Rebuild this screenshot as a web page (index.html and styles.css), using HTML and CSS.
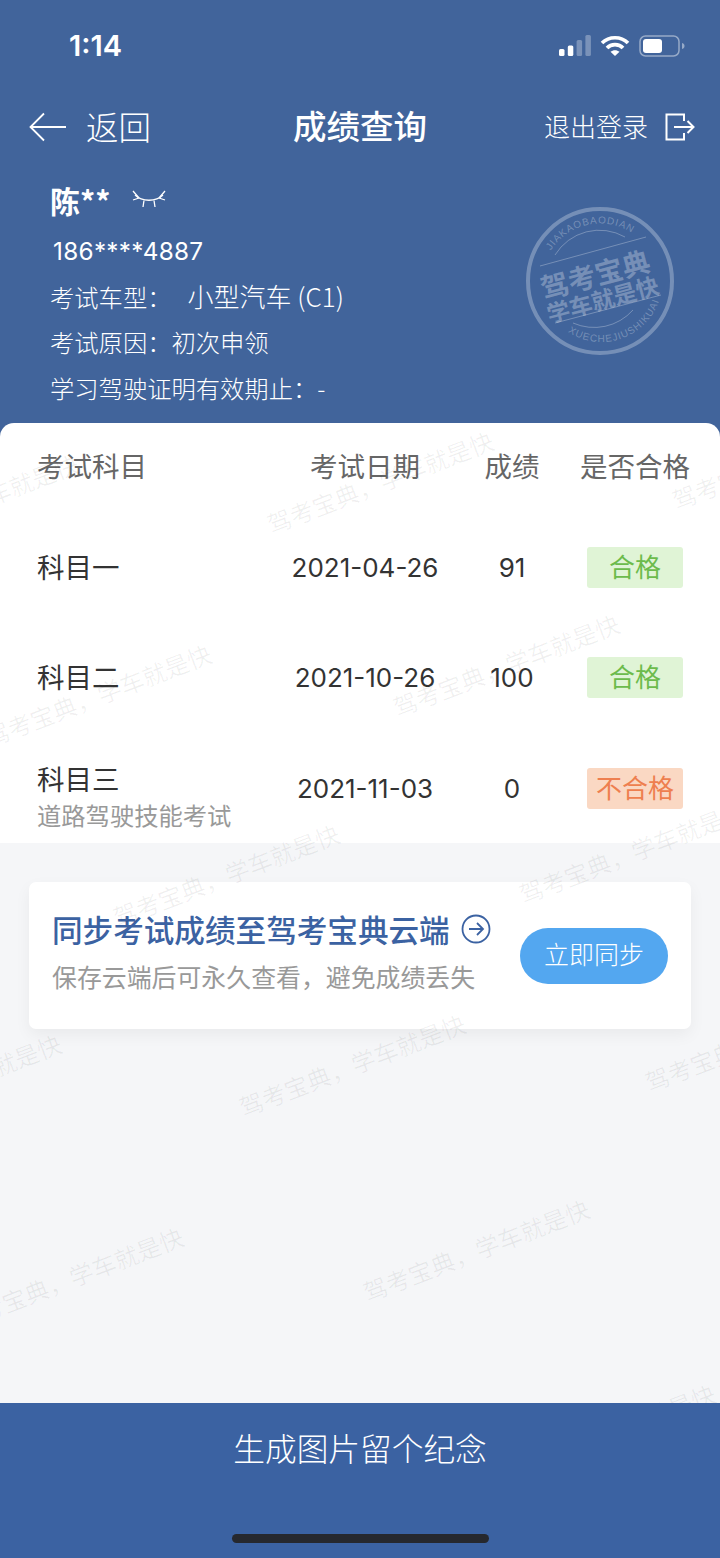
FILE: index.html
```html
<!DOCTYPE html>
<html lang="zh-CN">
<head>
  <meta charset="utf-8">
  <meta name="viewport" content="width=device-width, initial-scale=1.0">
  <link rel="stylesheet" href="styles.css">
  <title>成绩查询</title>
</head>
<body>
  <div class="page">
    <header class="top">
      <div class="status-bar">
        <span class="clock">1:14</span>
        <div class="status-icons">
          <svg width="32" height="21" viewBox="0 0 32 21">
            <rect x="0" y="14" width="5.500" height="7" rx="1.500" fill="#fff"/>
            <rect x="8.800" y="10.500" width="5.500" height="10.500" rx="1.500" fill="#fff"/>
            <rect x="17.600" y="5" width="5.500" height="16" rx="1.500" fill="#fff" fill-opacity=".3"/>
            <rect x="26.400" y="0" width="5.500" height="21" rx="1.500" fill="#fff" fill-opacity=".3"/>
          </svg>
          <svg width="30" height="22" viewBox="0 0 30 22" fill="none" stroke="#fff" stroke-width="3.600">
            <path d="M2 8 C9 1 21 1 28 8"/>
            <path d="M7 13 C11 8.500 19 8.500 23 13"/>
            <path d="M15 21 L10.500 16.800 C13 14.600 17 14.600 19.500 16.800 Z" fill="#fff" stroke="none"/>
          </svg>
          <svg width="46" height="22" viewBox="0 0 46 22">
            <rect x="1" y="1" width="39" height="20" rx="5.500" fill="none" stroke="#fff" stroke-opacity=".45" stroke-width="1.500"/>
            <rect x="4" y="4" width="19" height="14" rx="3" fill="#fff"/>
            <path d="M43 8 C45 8.500 45.500 9.800 45.500 11 C45.500 12.200 45 13.500 43 14 Z" fill="#fff" fill-opacity=".45"/>
          </svg>
        </div>
      </div>
      <nav class="nav">
        <div class="nav-back">
          <svg width="38" height="30" viewBox="0 0 38 30" fill="none" stroke="#fff" stroke-width="1.800">
            <path d="M15 1.500 L1.500 15 L15 28.500"/>
            <path d="M1.500 15 H37"/>
          </svg>
          <span>返回</span>
        </div>
        <h1 class="nav-title">成绩查询</h1>
        <div class="nav-logout">
          <span>退出登录</span>
          <svg width="30" height="28" viewBox="0 0 30 28" fill="none" stroke="#fff" stroke-width="2">
            <path d="M19 8 V1.500 H1.500 V26.500 H19 V20"/>
            <path d="M9 14 H28.500"/>
            <path d="M22.500 8 L28.500 14 L22.500 20"/>
          </svg>
        </div>
      </nav>
      <section class="profile">
        <div class="profile-name">
          <strong>陈**</strong>
          <svg width="34" height="20" viewBox="0 0 34 20" fill="none" stroke="#fff" stroke-width="1.300">
            <path d="M3 5 C10 12 24 12 31 5"/>
            <path d="M1 1 L7 8 M33 1 L27 8 M1 10 L7 8 M33 10 L27 8"/>
            <path d="M12 10.500 L11 17 M22 10.500 L23 17"/>
          </svg>
        </div>
        <p class="profile-phone">186****4887</p>
        <p>考试车型：<span class="profile-car">小型汽车 (C1)</span></p>
        <p>考试原因：初次申领</p>
        <p>学习驾驶证明有效期止：-</p>
        <svg class="stamp" width="150" height="150" viewBox="0 0 150 150" fill="none" stroke="#fff" stroke-opacity=".28">
          <defs>
            <path id="arc-top" d="M26 44.500 A58 58 0 0 1 125 46"/>
            <path id="arc-bottom" d="M43 126 A61 61 0 0 0 136 88"/>
          </defs>
          <circle cx="75" cy="75" r="72" stroke-width="4"/>
          <path d="M30 49 A52 52 0 0 1 100 31" stroke-width="1"/>
          <path d="M15 60 L121 31 M30 117 L136 89" stroke-width="1"/>
          <path d="M48 117 A52 52 0 0 0 108 104" stroke-width="1"/>
          <text class="stamp-small" stroke="none"><textPath href="#arc-top">JIAKAOBAODIAN</textPath></text>
          <text class="stamp-small" stroke="none"><textPath href="#arc-bottom">XUECHEJIUSHIKUAI</textPath></text>
          <text class="stamp-big" x="73" y="79" text-anchor="middle" stroke="none" transform="rotate(-15 73 79)">驾考宝典</text>
          <text class="stamp-mid" x="80" y="102" text-anchor="middle" stroke="none" transform="rotate(-15 80 102)">学车就是快</text>
        </svg>
      </section>
    </header>

    <main class="content">
      <section class="scores">
        <div class="row row-head">
          <span>考试科目</span>
          <span class="cell">考试日期</span>
          <span class="cell">成绩</span>
          <span class="cell">是否合格</span>
        </div>
        <div class="row">
          <span class="subject-name">科目一</span>
          <span class="cell num">2021-04-26</span>
          <span class="cell num">91</span>
          <span class="cell"><b class="tag tag-pass">合格</b></span>
        </div>
        <div class="row">
          <span class="subject-name">科目二</span>
          <span class="cell num">2021-10-26</span>
          <span class="cell num">100</span>
          <span class="cell"><b class="tag tag-pass">合格</b></span>
        </div>
        <div class="row">
          <div class="subject">
            <span>科目三</span>
            <small>道路驾驶技能考试</small>
          </div>
          <span class="cell num">2021-11-03</span>
          <span class="cell num">0</span>
          <span class="cell"><b class="tag tag-fail">不合格</b></span>
        </div>
      </section>

      <section class="sync">
        <div class="sync-text">
          <div class="sync-title">
            <span>同步考试成绩至驾考宝典云端</span>
            <svg width="30" height="30" viewBox="0 0 30 30" fill="none" stroke="#3b62a2" stroke-width="1.800">
              <circle cx="15" cy="15" r="13.500"/>
              <path d="M8 15 H22 M16 9 L22 15 L16 21"/>
            </svg>
          </div>
          <p>保存云端后可永久查看，避免成绩丢失</p>
        </div>
        <button class="sync-btn">立即同步</button>
      </section>
    </main>

    <div class="wm wm-1">驾考宝典，学车就是快</div>
    <div class="wm wm-2">驾考宝典，学车就是快</div>
    <div class="wm wm-3">驾考宝典，学车就是快</div>
    <div class="wm wm-4">驾考宝典，学车就是快</div>
    <div class="wm wm-5">驾考宝典，学车就是快</div>
    <div class="wm wm-6">驾考宝典，学车就是快</div>
    <div class="wm wm-7">驾考宝典，学车就是快</div>
    <div class="wm wm-8">驾考宝典，学车就是快</div>
    <div class="wm wm-9">驾考宝典，学车就是快</div>
    <div class="wm wm-10">驾考宝典，学车就是快</div>
    <div class="wm wm-11">驾考宝典，学车就是快</div>
    <div class="wm wm-12">驾考宝典，学车就是快</div>
    <div class="wm wm-13">驾考宝典，学车就是快</div>

    <footer class="bottom">
      <span class="bottom-label">生成图片留个纪念</span>
      <div class="home-bar"></div>
    </footer>
  </div>
</body>
</html>
```

FILE: styles.css
```css
* {
  box-sizing: border-box;
}

html,
body {
  margin: 0;
  padding: 0;
}

body {
  font-family: "Inter", "Noto Sans CJK SC", sans-serif;
  background-color: #f5f6f8;
  color: #333;
}

.page {
  position: relative;
  width: 720px;
  height: 1558px;
  display: flex;
  flex-direction: column;
  overflow: hidden;
}

/* header */
.top {
  height: 440px;
  flex-shrink: 0;
  background-color: #41649b;
  color: #fff;
}

.status-bar {
  height: 91px;
  padding: 0 35px 0 69px;
  display: flex;
  align-items: center;
  justify-content: space-between;
}

.clock {
  font-size: 29px;
  font-weight: 600;
}

.status-icons {
  display: flex;
  align-items: center;
  gap: 9px;
}

.nav {
  height: 71px;
  padding: 0 25px 0 29px;
  display: flex;
  align-items: center;
  justify-content: space-between;
  position: relative;
  font-family: "Noto Sans CJK SC", sans-serif;
}

.nav-back {
  display: flex;
  align-items: center;
  gap: 19px;
  font-size: 32.500px;
  font-weight: 300;
}

.nav-back span,
.nav-logout span {
  padding-bottom: 3px;
}

.nav-title {
  position: absolute;
  left: 0;
  right: 0;
  margin: 0;
  padding-bottom: 4px;
  text-align: center;
  font-size: 33.500px;
  font-weight: 500;
}

.nav-logout {
  display: flex;
  align-items: center;
  gap: 17px;
  font-size: 26px;
  font-weight: 300;
}

.profile {
  position: relative;
  padding: 15px 0 0 50px;
  font-size: 24.300px;
  font-weight: 300;
}

.profile p {
  margin: 0;
  height: 46px;
  line-height: 46px;
  padding-top: 4px;
  font-family: "Noto Sans CJK SC", sans-serif;
}

.profile .profile-phone {
  padding-left: 3px;
  padding-top: 5px;
  font-family: "Inter", sans-serif;
  font-weight: 400;
  letter-spacing: .3px;
}

.profile-car {
  margin-left: 16px;
  font-size: 26px;
}

.profile-name {
  height: 46px;
  display: flex;
  align-items: center;
  gap: 22px;
}

.profile-name strong {
  font-family: "Noto Sans CJK SC", sans-serif;
  font-size: 30px;
  font-weight: 600;
}

.stamp {
  position: absolute;
  right: 45px;
  top: 44px;
}

.stamp-small {
  font-family: "Liberation Sans", sans-serif;
  font-size: 10px;
  letter-spacing: .9px;
  fill: #fff;
  fill-opacity: .28;
}

.stamp-big {
  font-family: "Noto Sans CJK SC", sans-serif;
  font-size: 28px;
  font-weight: 700;
  fill: #fff;
  fill-opacity: .28;
}

.stamp-mid {
  font-family: "Noto Sans CJK SC", sans-serif;
  font-size: 23px;
  font-weight: 700;
  fill: #fff;
  fill-opacity: .28;
}

/* content */
.content {
  flex: 1;
  margin-top: -17px;
}

.scores {
  height: 420px;
  background-color: #fff;
  border-radius: 14px 14px 0 0;
  font-size: 27.500px;
  color: #333;
}

.row {
  height: 111px;
  padding-left: 37px;
  display: grid;
  grid-template-columns: 255px 146px 148px 98px;
  align-items: center;
  font-family: "Noto Sans CJK SC", sans-serif;
}

.row-head {
  height: 87px;
  padding-bottom: 3px;
  color: #666;
}

.row:nth-child(2) {
  height: 112px;
  padding-top: 2px;
}

.subject-name {
  padding-bottom: 3px;
}

.cell {
  display: flex;
  justify-content: center;
  white-space: nowrap;
}

.num {
  font-family: "Inter", sans-serif;
  font-size: 26px;
}

.subject {
  display: flex;
  flex-direction: column;
  margin-top: 18px;
}

.subject span {
  line-height: 34px;
}

.subject small {
  font-size: 24.300px;
  line-height: 40px;
  color: #999;
}

.tag {
  width: 96px;
  height: 41px;
  line-height: 38px;
  text-align: center;
  font-weight: 400;
  border-radius: 3px;
  font-size: 26px;
}

.tag-pass {
  background-color: #e0f4d6;
  color: #6cbb4c;
}

.tag-fail {
  background-color: #fad8c3;
  color: #ee7f4f;
}

.sync {
  margin: 39px 29px 0;
  height: 147px;
  padding: 0 23px;
  background-color: #fff;
  border-radius: 7px;
  box-shadow: 0 6px 16px rgba(0, 0, 0, 0.05);
  display: flex;
  align-items: center;
  justify-content: space-between;
  font-family: "Noto Sans CJK SC", sans-serif;
}

.sync-text {
  margin-top: -10px;
}

.sync-title {
  display: flex;
  align-items: center;
  gap: 11px;
  font-size: 30.600px;
  font-weight: 500;
  color: #3b62a2;
}

.sync-text p {
  margin: 7px 0 0;
  font-size: 24.900px;
  color: #999;
}

.sync-btn {
  width: 148px;
  height: 56px;
  border: none;
  border-radius: 28px;
  background-color: #53a7f0;
  color: #fff;
  font-family: inherit;
  font-size: 25px;
  font-weight: 300;
  padding: 0 0 5px;
}

/* watermark */
.wm {
  position: absolute;
  width: 300px;
  margin-left: -150px;
  margin-top: -16px;
  text-align: center;
  line-height: 32px;
  font-family: "Noto Sans CJK SC", sans-serif;
  font-size: 24px;
  color: rgba(0, 0, 0, 0.06);
  transform: rotate(-21deg);
  white-space: nowrap;
  pointer-events: none;
}

.wm-1 { left: -35px; top: 505px; }
.wm-2 { left: 380px; top: 482px; }
.wm-3 { left: 785px; top: 458px; }
.wm-4 { left: 98px; top: 695px; }
.wm-5 { left: 506px; top: 665px; }
.wm-6 { left: 226px; top: 875px; }
.wm-7 { left: 632px; top: 852px; }
.wm-8 { left: -52px; top: 1085px; }
.wm-9 { left: 352px; top: 1065px; }
.wm-10 { left: 758px; top: 1040px; }
.wm-11 { left: 70px; top: 1278px; }
.wm-12 { left: 476px; top: 1250px; }
.wm-13 { left: 602px; top: 1435px; }

/* footer */
.bottom {
  position: relative;
  height: 155px;
  flex-shrink: 0;
  background-color: #3b62a2;
  color: #fff;
  text-align: center;
  font-family: "Noto Sans CJK SC", sans-serif;
}

.bottom-label {
  display: block;
  padding-top: 21px;
  font-size: 31.700px;
  font-weight: 300;
  line-height: 46px;
}

.home-bar {
  position: absolute;
  left: 232px;
  bottom: 15px;
  width: 257px;
  height: 9px;
  border-radius: 5px;
  background-color: #26282e;
}
```
